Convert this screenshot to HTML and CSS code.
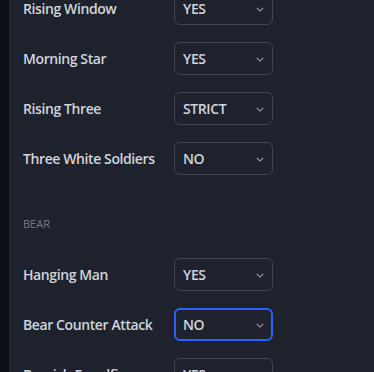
FILE: index.html
```html
<!DOCTYPE html>
<html>
<head>
<meta charset="utf-8">
<link rel="stylesheet" href="styles.css">
</head>
<body>
<div class="strip"></div>
<div class="panel">
  <div class="list">
    <div class="row"><span class="label">Rising Window</span><div class="select"><span>YES</span><svg class="chev" viewBox="0 0 10 6"><path d="M1 1l4 4 4-4"/></svg></div></div>
    <div class="row"><span class="label">Morning Star</span><div class="select"><span>YES</span><svg class="chev" viewBox="0 0 10 6"><path d="M1 1l4 4 4-4"/></svg></div></div>
    <div class="row"><span class="label">Rising Three</span><div class="select"><span>STRICT</span><svg class="chev" viewBox="0 0 10 6"><path d="M1 1l4 4 4-4"/></svg></div></div>
    <div class="row"><span class="label">Three White Soldiers</span><div class="select"><span>NO</span><svg class="chev" viewBox="0 0 10 6"><path d="M1 1l4 4 4-4"/></svg></div></div>
    <div class="section">BEAR</div>
    <div class="row"><span class="label">Hanging Man</span><div class="select"><span>YES</span><svg class="chev" viewBox="0 0 10 6"><path d="M1 1l4 4 4-4"/></svg></div></div>
    <div class="row"><span class="label">Bear Counter Attack</span><div class="select focus"><span>NO</span><svg class="chev" viewBox="0 0 10 6"><path d="M1 1l4 4 4-4"/></svg></div></div>
    <div class="row"><span class="label">Bearish Engulfing</span><div class="select"><span>YES</span><svg class="chev" viewBox="0 0 10 6"><path d="M1 1l4 4 4-4"/></svg></div></div>
  </div>
</div>
</body>
</html>
```

FILE: styles.css
```css
html, body {
  margin: 0;
  padding: 0;
  height: 100%;
  overflow: hidden;
}
body {
  display: flex;
  background: #1e222d;
  font-family: "Open Sans", "Liberation Sans", sans-serif;
}
.strip {
  width: 9px;
  flex: none;
  background: #0e1016;
}
.panel {
  flex: 1;
  padding-left: 14px;
}
.list {
  margin-top: -17px;
}
.row {
  height: 50px;
  display: grid;
  grid-template-columns: 151px 99px;
  align-items: center;
}
.label {
  color: #d1d4dc;
  font-size: 14px;
  font-weight: 600;
  letter-spacing: -0.4px;
  white-space: nowrap;
}
.select {
  box-sizing: border-box;
  height: 33px;
  border: 1px solid #434651;
  border-radius: 6px;
  display: flex;
  align-items: center;
  justify-content: space-between;
  padding: 0 8px 0 8px;
  color: #d1d4dc;
  font-size: 14px;
  font-weight: 600;
  letter-spacing: -0.4px;
}
.select.focus {
  border: 2px solid #2962ff;
  padding: 0 7px 0 7px;
}
.chev {
  width: 8px;
  height: 5px;
  margin-top: 2px;
  fill: none;
  stroke: #a3a6af;
  stroke-width: 1.3;
}
.section {
  padding: 33px 0 17px;
  line-height: 16px;
  font-size: 11px;
  color: #787b86;
}
```
